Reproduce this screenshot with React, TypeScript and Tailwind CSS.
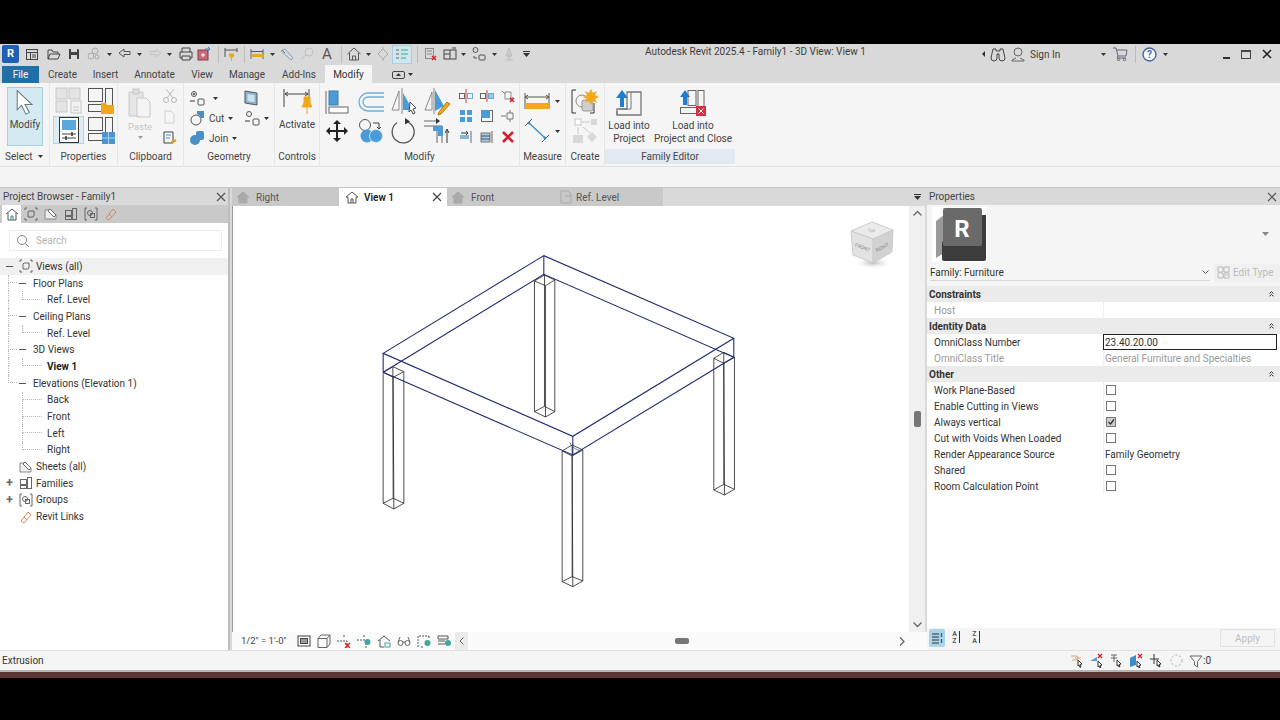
import type { ReactNode } from 'react'

type IcProps = { w?: number; h?: number; className?: string; children: ReactNode }

function Ic({ w = 16, h = 16, className, children }: IcProps) {
  return (
    <svg width={w} height={h} viewBox={`0 0 ${w} ${h}`} fill="none" stroke="#555" strokeWidth="1" className={`shrink-0 ${className ?? ''}`}>
      {children}
    </svg>
  )
}

const Drop = () => (
  <svg width="5" height="3" viewBox="0 0 5 3" className="shrink-0">
    <path d="M0 0h5L2.5 3z" fill="#333" />
  </svg>
)

function Cell({ className, children }: { className: string; children?: ReactNode }) {
  return <span className={`flex shrink-0 items-center justify-center ${className}`}>{children}</span>
}

const Sep = () => <span className="h-[17px] w-px bg-[#bcbcbc]" />

function TitleBar() {
  return (
    <div className="flex h-[20px] items-center bg-[#d9d9d9] text-[#3d3d3d]">
      <Cell className="w-[21px]">
        <span className="flex h-[18px] w-[17px] items-center justify-center rounded-[2px] bg-[#1f5fb4] text-[11px] font-bold text-white">R</span>
      </Cell>
      <Cell className="w-[22px]">
        <Ic><rect x="2.5" y="3.5" width="11" height="10" stroke="#444" /><path d="M2.5 6.5h11M6.5 6.5v7M8 9h4M8 11h4" stroke="#444" /></Ic>
      </Cell>
      <Cell className="w-[21px]">
        <Ic><path d="M2 13V4h4l1 2h5v2M2 13l2-5h10l-2 5z" stroke="#444" /></Ic>
      </Cell>
      <Cell className="w-[20px]">
        <Ic><path d="M3 3h9l1 1v9H3z" fill="#444" stroke="none" /><rect x="5" y="3" width="6" height="3" fill="#ddd" stroke="none" /><rect x="5" y="9" width="6" height="4" fill="#ddd" stroke="none" /></Ic>
      </Cell>
      <Cell className="w-[18px]">
        <Ic><circle cx="6" cy="10" r="3" stroke="#aaa" /><circle cx="10" cy="5" r="3" stroke="#aaa" /><circle cx="12" cy="11" r="2" stroke="#aaa" /></Ic>
      </Cell>
      <Cell className="w-[15px]"><Drop /></Cell>
      <Cell className="w-[15px]">
        <Ic w={14} h={12}><path d="M1 5l5-4v2.500h6v3H6V9z" stroke="#555" /></Ic>
      </Cell>
      <Cell className="w-[15px]"><Drop /></Cell>
      <Cell className="w-[15px]">
        <Ic w={14} h={12}><path d="M13 5L8 1v2.500H2v3h6V9z" stroke="#c4c4c4" /></Ic>
      </Cell>
      <Cell className="w-[15px]"><Drop /></Cell>
      <Cell className="w-[17px]">
        <Ic><path d="M4 6V2h8v4M4 12H2V6h12v6h-2M4 10h8v4H4z" stroke="#444" /></Ic>
      </Cell>
      <Cell className="w-[20px]">
        <Ic><rect x="2" y="4" width="10" height="10" fill="#c96a78" stroke="#8c3a48" /><path d="M5 9h4M7 7v4" stroke="#fff" /><path d="M9 3h5M12 1l2 2-2 2" stroke="#3a7fc4" /></Ic>
      </Cell>
      <Cell className="w-[8px]"><Sep /></Cell>
      <Cell className="w-[18px]">
        <Ic><path d="M2 2v9M14 2v4M2 4h12" /><path d="M6 8h5l-1 3H7zM8.500 11v4" fill="#e8a91c" stroke="#e8a91c" /></Ic>
      </Cell>
      <Cell className="w-[8px]"><Sep /></Cell>
      <Cell className="w-[18px]">
        <Ic><path d="M2 3v10M14 3v10" stroke="#666" /><rect x="2" y="8" width="12" height="3" fill="#e8a91c" stroke="none" /><path d="M2 5.500h12" /></Ic>
      </Cell>
      <Cell className="w-[12px]"><Drop /></Cell>
      <Cell className="w-[18px]">
        <Ic><path d="M2 5l4-2 8 9-2 2z" stroke="#7aa6c4" /><path d="M3 4l3 3" stroke="#777" /></Ic>
      </Cell>
      <Cell className="w-[22px]">
        <Ic><circle cx="10" cy="6" r="4" stroke="#c0c0c0" /><path d="M2 13l5-4" stroke="#c0c0c0" /></Ic>
      </Cell>
      <Cell className="w-[18px]"><span className="text-[15px] leading-none text-[#555]">A</span></Cell>
      <Cell className="w-[10px]"><Sep /></Cell>
      <Cell className="w-[15px]">
        <Ic><path d="M1.500 8L8 2l6.500 6M3.500 7v7h9V7M6.500 14v-4h3v4" stroke="#555" /></Ic>
      </Cell>
      <Cell className="w-[14px]"><Drop /></Cell>
      <Cell className="w-[15px]">
        <Ic><path d="M8 3l5 5-5 5-5-5zM8 1v2M8 13v2" stroke="#aaa" /></Ic>
      </Cell>
      <Cell className="w-[24px]">
        <span className="flex h-[19px] w-[20px] items-center justify-center border border-[#a8d0dc] bg-[#cfe6ee]">
          <Ic w={14} h={12}><path d="M1 2h3M1 6h3M1 10h3" stroke="#666" /><path d="M6 2h7M6 6h7M6 10h5" stroke="#3a8" /></Ic>
        </span>
      </Cell>
      <Cell className="w-[6px]"><Sep /></Cell>
      <Cell className="w-[21px]">
        <Ic><rect x="2.500" y="2.500" width="8" height="10" stroke="#888" /><path d="M4 5h5M4 8h5" stroke="#888" /><path d="M9 10l4 4M13 10l-4 4" stroke="#d22" strokeWidth="1.500" /></Ic>
      </Cell>
      <Cell className="w-[17px]">
        <Ic><rect x="2" y="4" width="12" height="9" stroke="#444" /><path d="M2 8h6M8 4v9M10 2h4" stroke="#444" /></Ic>
      </Cell>
      <Cell className="w-[11px]"><Drop /></Cell>
      <Cell className="w-[19px]">
        <Ic><circle cx="4.500" cy="4" r="2.500" stroke="#555" /><rect x="8" y="9" width="6" height="5" rx="1" stroke="#555" /><path d="M3 10v2h3" stroke="#555" /></Ic>
      </Cell>
      <Cell className="w-[13px]"><Drop /></Cell>
      <Cell className="w-[15px]">
        <Ic><path d="M8 2l3 8H5zM8 10v4M4 14h8" stroke="#bbb" fill="#ccc" /></Ic>
      </Cell>
      <Cell className="w-[20px]">
        <svg width="7" height="6" viewBox="0 0 7 6"><path d="M0 .5h7" stroke="#333" /><path d="M0 2h7L3.500 6z" fill="#333" /></svg>
      </Cell>
      <span className="mb-[5px] ml-[109px] text-[10px] leading-none">Autodesk Revit 2025.4 - Family1 - 3D View: View 1</span>
      <div className="ml-auto flex items-center pr-[2px]">
        <Cell className="w-[10px]">
          <svg width="3" height="6" viewBox="0 0 3 6"><path d="M3 0v6L0 3z" fill="#333" /></svg>
        </Cell>
        <Cell className="w-[20px]">
          <Ic><path d="M3 3h3v2h4V3h3l2 9a2 2 0 0 1-6 0V8H7v4a2 2 0 0 1-6 0z" stroke="#444" /></Ic>
        </Cell>
        <Cell className="w-[20px]">
          <Ic><circle cx="8" cy="6" r="4" stroke="#666" /><path d="M2 15v-1l4-2M14 15v-1l-4-2M2 15h12" stroke="#666" /></Ic>
        </Cell>
        <span className="ml-[2px] w-[68px] text-[10px]">Sign In</span>
        <Cell className="w-[10px]"><Drop /></Cell>
        <Cell className="w-[24px]">
          <Ic><path d="M1 2h3l2 8h8l1-6H5M6 10l-1 2h9" stroke="#667" /><circle cx="6.500" cy="13.500" r="1.200" stroke="#667" /><circle cx="12.500" cy="13.500" r="1.200" stroke="#667" /></Ic>
        </Cell>
        <Cell className="w-[6px]"><Sep /></Cell>
        <Cell className="w-[22px]">
          <svg width="15" height="15" viewBox="0 0 15 15">
            <circle cx="7.500" cy="7.500" r="6.500" fill="#fff" stroke="#3f66a8" strokeWidth="1.400" />
            <text x="7.500" y="11" textAnchor="middle" fontSize="10" fontWeight="700" fill="#3f66a8">?</text>
          </svg>
        </Cell>
        <Cell className="w-[10px]"><Drop /></Cell>
        <span className="w-[46px]" />
        <Cell className="w-[20px]"><span className="mt-[7px] h-[2px] w-[7px] bg-[#333]" /></Cell>
        <Cell className="w-[20px]"><span className="h-[9px] w-[10px] border border-t-2 border-[#444]" /></Cell>
        <Cell className="w-[22px]">
          <Ic w={12} h={12}><path d="M2 2l8 8M10 2l-8 8" stroke="#222" strokeWidth="1.600" /></Ic>
        </Cell>
      </div>
    </div>
  )
}

function TabRow() {
  const tabs = [
    ['Create', 'w-[45px]'],
    ['Insert', 'w-[41px]'],
    ['Annotate', 'w-[57px]'],
    ['View', 'w-[38px]'],
    ['Manage', 'w-[52px]'],
    ['Add-Ins', 'w-[52px]'],
  ]
  return (
    <div className="flex h-[19px] items-end bg-[#d9d9d9] text-[10px] text-[#444]">
      <span className="ml-[2px] flex h-[17px] w-[37px] items-center justify-center bg-[#1f6fa8] text-white">File</span>
      <span className="w-[1px]" />
      <div className="flex h-[17px] items-center">
        {tabs.map(([label, cls]) => (
          <span key={label} className={`text-center ${cls}`}>{label}</span>
        ))}
      </div>
      <span className="flex h-[18px] w-[47px] items-center justify-center bg-[#f5f5f5] text-[#333]">Modify</span>
      <Cell className="ml-[19px] h-[17px] w-[14px]">
        <span className="flex h-[8px] w-[13px] items-center justify-center rounded-[2px] border border-[#444]">
          <svg width="5" height="3" viewBox="0 0 5 3"><path d="M0 3h5L2.500 0z" fill="#333" /></svg>
        </span>
      </Cell>
      <Cell className="ml-[3px] h-[17px] w-[5px]"><Drop /></Cell>
    </div>
  )
}

function Panel({ className, label, labelClass, children }: { className: string; label: string; labelClass?: string; children: ReactNode }) {
  return (
    <div className={`flex shrink-0 flex-col border-r border-[#e6e6e6] ${className}`}>
      <div className="h-[65px]">{children}</div>
      <div className={`flex h-[17px] items-center justify-center text-[10px] text-[#444] ${labelClass ?? ''}`}>{label}</div>
    </div>
  )
}

const ArrowCursor = ({ s = 26 }: { s?: number }) => (
  <svg width={s} height={s} viewBox="0 0 30 30" fill="#fff" stroke="#6a7a82" strokeWidth="1.200" className="shrink-0">
    <path d="M6 2l17 16h-8l5 9-4 2-5-10-5 5z" />
  </svg>
)

function Ribbon() {
  const gray = '#c8c8c8'
  return (
    <div className="flex h-[83px] bg-[#f5f5f5] text-[#444]">
      <Panel className="w-[50px]" label="" labelClass="hidden">
        <div className="flex h-[82px] flex-col">
          <div className="ml-[7px] mt-[4px] flex h-[59px] w-[36px] flex-col items-center border border-[#a8d0dc] bg-[#d5eaf2] pt-[1px]">
            <ArrowCursor />
            <span className="mt-[2px] text-[10px]">Modify</span>
          </div>
          <div className="mt-[2px] flex h-[17px] items-center gap-[6px] pl-[5px] text-[10px]">
            Select <Drop />
          </div>
        </div>
      </Panel>
      <Panel className="w-[68px]" label="Properties">
        <div className="grid grid-cols-[33px_31px] pl-[2px] pt-[4px]">
          <div className="flex h-[29px] items-start justify-center">
            <Ic w={30} h={28}>
              <rect x="2" y="1" width="11" height="11" fill="#e4e4e4" stroke={gray} />
              <rect x="15" y="1" width="11" height="11" fill="#e4e4e4" stroke={gray} />
              <rect x="2" y="14" width="11" height="11" fill="#e4e4e4" stroke={gray} />
              <rect x="17" y="14" width="10" height="12" fill="#f2f2f2" stroke={gray} />
              <path d="M19 20h6M19 23h6" stroke={gray} />
            </Ic>
          </div>
          <div className="flex h-[29px] items-start justify-center">
            <Ic w={28} h={28}>
              <rect x="1.500" y="1.500" width="14" height="13" stroke="#555" />
              <rect x="18.500" y="1.500" width="7" height="23" stroke="#555" />
              <rect x="1.500" y="17.500" width="14" height="7" stroke="#555" />
              <path d="M14 16h5l1 2h7v9H14z" fill="#f2a71b" stroke="none" />
            </Ic>
          </div>
          <div className="flex h-[29px] items-start justify-center">
            <span className="flex h-[28px] w-[31px] items-center justify-center border border-[#b0d6e2] bg-[#dcedf3]">
              <Ic w={20} h={26}>
                <rect x=".5" y=".5" width="19" height="25" fill="#fff" stroke="#333" />
                <rect x="3" y="3" width="14" height="10" fill="#5aa9dc" stroke="none" />
                <path d="M3 17h14M3 21h14" stroke="#444" />
                <path d="M13 15v4M7 19v4" stroke="#333" strokeWidth="1.500" />
              </Ic>
            </span>
          </div>
          <div className="flex h-[29px] items-start justify-center">
            <Ic w={28} h={28}>
              <rect x="1.500" y="1.500" width="14" height="13" stroke="#555" />
              <rect x="18.500" y="1.500" width="7" height="23" stroke="#555" />
              <rect x="1.500" y="17.500" width="14" height="7" stroke="#555" />
              <rect x="15" y="16" width="13" height="12" fill="#4b93d1" stroke="none" />
              <path d="M21.500 16v12M15 22h13" stroke="#a8d0ef" />
            </Ic>
          </div>
        </div>
      </Panel>
      <Panel className="w-[66px]" label="Clipboard">
        <div className="flex pl-[10px] pt-[5px]">
          <div className="flex w-[24px] flex-col items-center">
            <Ic w={24} h={31}>
              <path d="M1 4h14v24H1z" fill="#e6e6e6" stroke={gray} />
              <rect x="5" y="1" width="6" height="5" fill="#ddd" stroke={gray} />
              <path d="M9 10h9l4 4v15H9z" fill="#f4f4f4" stroke={gray} />
            </Ic>
            <span className="mt-[1px] text-[9.5px] leading-[13px] text-[#c6c6c6]">Paste</span>
            <span className="mt-[3px]"><svg width="5" height="3" viewBox="0 0 5 3"><path d="M0 0h5L2.500 3z" fill="#999" /></svg></span>
          </div>
          <div className="ml-[9px] flex w-[18px] flex-col items-center gap-[5px]">
            <Ic>
              <circle cx="4" cy="12" r="2.500" stroke="#b8b8b8" />
              <circle cx="12" cy="12" r="2.500" stroke="#b8b8b8" />
              <path d="M5 10l7-9M11 10L4 1" stroke="#b8b8b8" />
            </Ic>
            <Ic><path d="M3 2h6l3 3v9H3z" stroke="#d0d0d0" /></Ic>
            <Ic>
              <path d="M2 2h9v11H2z" stroke="#444" />
              <path d="M4 5h5M4 8h4" stroke="#4a90c8" />
              <path d="M9 13l5-3" stroke="#d8a21c" strokeWidth="2.500" />
            </Ic>
          </div>
        </div>
      </Panel>
      <Panel className="w-[91px]" label="Geometry">
        <div className="grid grid-cols-[48px_30px] gap-y-[4px] pl-[4px] pt-[7px] text-[10px]">
          <div className="flex h-[16px] items-center gap-[8px] pl-[1px]">
            <Ic>
              <circle cx="5" cy="4" r="2.500" stroke="#555" />
              <circle cx="5" cy="4" r=".8" fill="#555" />
              <rect x="9" y="9" width="6" height="6" rx="1" stroke="#555" />
              <path d="M1 11h5" stroke="#333" />
            </Ic>
            <Drop />
          </div>
          <div className="flex h-[16px] items-center justify-center">
            <Ic w={14} h={16}><path d="M1 1l12 2v12L1 13z" fill="#8ab4d4" stroke="#555" /><path d="M3.500 4l7 1v7l-7-1z" fill="#cfe1ee" stroke="none" /></Ic>
          </div>
          <div className="flex h-[16px] items-center gap-[4px] pl-[1px]">
            <Ic><circle cx="7" cy="10" r="5" stroke="#555" /><path d="M8 1h7v7H12A6 6 0 0 0 8 4z" fill="#4a90c8" stroke="none" /></Ic>
            <span>Cut</span>
            <Drop />
          </div>
          <div className="flex h-[16px] items-center gap-[4px] pl-[8px]">
            <Ic>
              <circle cx="5" cy="4" r="2.500" stroke="#555" />
              <rect x="9" y="9" width="6" height="6" rx="1" stroke="#555" />
              <path d="M1 11h5" stroke="#333" />
            </Ic>
            <Drop />
          </div>
          <div className="flex h-[16px] items-center gap-[4px] pl-[1px]">
            <Ic><circle cx="6" cy="10" r="5" fill="#4a90c8" stroke="none" /><rect x="7" y="1" width="8" height="9" rx="2" fill="#4a90c8" stroke="none" /></Ic>
            <span>Join</span>
            <Drop />
          </div>
        </div>
      </Panel>
      <Panel className="w-[45px]" label="Controls">
        <div className="flex flex-col items-center pt-[5px] text-[10px]">
          <Ic w={30} h={30}>
            <path d="M2 1v18M27 1v18" stroke="#444" />
            <path d="M3 6h23M3 6l3-2M3 6l3 2M26 6l-3-2M26 6l-3 2" stroke="#444" />
            <path d="M22 9h6v6l2 4H20l2-4zM25 19v7" fill="#f0a81c" stroke="#f0a81c" />
          </Ic>
          <span className="-mt-[1px]">Activate</span>
        </div>
      </Panel>
      <Panel className="w-[200px]" label="Modify">
        <div className="flex pt-[4px]">
          <div className="grid grid-cols-[34px_33px_33px_33px]">
            <div className="flex h-[29px] items-center justify-center">
              <Ic w={24} h={24}>
                <path d="M1 1v23" stroke="#666" />
                <rect x="4" y="1" width="9" height="14" fill="#4a9bd8" stroke="#3a7fb0" />
                <rect x="4" y="17" width="19" height="6" fill="#fff" stroke="#666" />
              </Ic>
            </div>
            <div className="flex h-[29px] items-center justify-center">
              <Ic w={28} h={20}>
                <path d="M27 1H11a9 9 0 0 0 0 18h16" stroke="#6fb0d8" strokeWidth="1.400" />
                <path d="M27 5H11a5 5 0 0 0 0 10h16" stroke="#6fb0d8" strokeWidth="1.400" />
              </Ic>
            </div>
            <div className="flex h-[29px] items-center justify-center">
              <Ic w={26} h={28}>
                <path d="M8 3v19H1zM11 0v26" stroke="#888" />
                <path d="M12 5l8 14v3h-8z" fill="#4a9bd8" stroke="none" />
                <path d="M19 14l6 6-3 1 2 4-2 1-2-4-2 2z" fill="#fff" stroke="#444" />
              </Ic>
            </div>
            <div className="flex h-[29px] items-center justify-center">
              <Ic w={28} h={28}>
                <path d="M9 4v18H2zM11 0v26" stroke="#888" />
                <path d="M12 2l9 16-9 5z" fill="#4a9bd8" stroke="none" />
                <path d="M16 24l8-10 3 2-9 10-3 1z" fill="#f0a81c" stroke="#b87c10" />
              </Ic>
            </div>
            <div className="flex h-[29px] items-center justify-center">
              <Ic w={24} h={24}>
                <path d="M12 1l4 4h-3v6h6V8l4 4-4 4v-3h-6v6h3l-4 4-4-4h3v-6H5v3l-4-4 4-4v3h6V5H8z" fill="#222" stroke="none" />
              </Ic>
            </div>
            <div className="flex h-[29px] items-center justify-center">
              <Ic w={26} h={26}>
                <circle cx="7" cy="7" r="5.500" stroke="#555" />
                <path d="M15 5h6v6M19 9l2 2 2-2" stroke="#444" />
                <circle cx="9" cy="18" r="6.500" fill="#4a9bd8" stroke="none" />
                <circle cx="18" cy="18" r="6.500" fill="#4a9bd8" stroke="#cfe4f2" />
              </Ic>
            </div>
            <div className="flex h-[29px] items-center justify-center">
              <Ic w={26} h={26}>
                <path d="M15 3.300A11 11 0 1 1 6 4.800" stroke="#555" strokeWidth="1.300" />
                <path d="M14 0l5 3.500-5 3z" fill="#333" stroke="none" />
              </Ic>
            </div>
            <div className="flex h-[29px] items-center justify-center">
              <Ic w={28} h={26}>
                <path d="M1 3h14M1 8h18V25M14 13v12M18 8" stroke="#666" />
                <path d="M13 0l4 3-4 3z" fill="#333" stroke="none" />
                <path d="M10 8h10v10h-5v-5h-5z" fill="#4a9bd8" stroke="none" />
                <path d="M24 25V12M22 15l2-4 2 4" stroke="#333" />
              </Ic>
            </div>
          </div>
          <div className="ml-[2px] grid grid-cols-[21px_21px_21px] gap-y-[4px] pt-[1px]">
            <div className="flex h-[16px] items-center justify-center">
              <Ic><path d="M8 1v14" stroke="#c44" /><rect x="1.500" y="5.500" width="5" height="5" stroke="#666" /><rect x="9.500" y="5.500" width="5" height="5" stroke="#6aa8d8" /></Ic>
            </div>
            <div className="flex h-[16px] items-center justify-center">
              <Ic><rect x="1.500" y="5.500" width="5" height="5" stroke="#666" /><rect x="9.500" y="5.500" width="5" height="5" fill="#9cc8e8" stroke="#6aa8d8" /><path d="M8 2v12" stroke="#c44" /></Ic>
            </div>
            <div className="flex h-[16px] items-center justify-center">
              <Ic><path d="M2 3l3 3M5 4h6v7H5zM13 9l-3 5M10 9l4 5" stroke="#888" /><path d="M10 10l4 4M14 10l-4 4" stroke="#d22" strokeWidth="1.400" /></Ic>
            </div>
            <div className="flex h-[16px] items-center justify-center">
              <Ic><rect x="2" y="2" width="5" height="5" fill="#4a9bd8" stroke="none" /><rect x="9" y="2" width="5" height="5" fill="#4a9bd8" stroke="none" /><rect x="2" y="9" width="5" height="5" fill="#4a9bd8" stroke="none" /><rect x="9" y="9" width="5" height="5" fill="#4a9bd8" stroke="none" /></Ic>
            </div>
            <div className="flex h-[16px] items-center justify-center">
              <Ic><rect x="2.500" y="2.500" width="11" height="11" stroke="#666" /><rect x="2" y="2" width="9" height="8" fill="#4a9bd8" stroke="none" /></Ic>
            </div>
            <div className="flex h-[16px] items-center justify-center">
              <Ic><path d="M1 8h5M7 5h6v6H7zM10 2v3M10 11v3" stroke="#777" /></Ic>
            </div>
            <div className="flex h-[16px] items-center justify-center">
              <Ic><path d="M13 2v12" stroke="#666" /><rect x="2" y="6" width="9" height="4" fill="#8ab4d4" stroke="none" /><path d="M3 4h7M8 2l2 2-2 2" stroke="#333" /></Ic>
            </div>
            <div className="flex h-[16px] items-center justify-center">
              <Ic><path d="M13 2v12" stroke="#666" /><rect x="2" y="4" width="9" height="9" fill="#a8c8e0" stroke="#777" /><path d="M2 7h9M2 10h9" stroke="#555" /></Ic>
            </div>
            <div className="flex h-[16px] items-center justify-center">
              <Ic w={14} h={14}><path d="M2 2l10 10M12 2L2 12" stroke="#d81e2c" strokeWidth="2.600" /></Ic>
            </div>
          </div>
        </div>
      </Panel>
      <Panel className="w-[46px]" label="Measure">
        <div className="grid grid-cols-[32px_8px] gap-y-[7px] pl-[1px] pt-[8px]">
          <div className="flex h-[20px] items-center justify-center">
            <Ic w={26} h={20}>
              <path d="M1 2v16M25 2v16M1 6h24M1 6l3-2M1 6l3 2M25 6l-3-2M25 6l-3 2" stroke="#555" />
              <rect x="1" y="12" width="24" height="6" fill="#f0a81c" stroke="none" />
            </Ic>
          </div>
          <div className="flex items-center justify-center"><Drop /></div>
          <div className="flex h-[26px] items-center justify-center">
            <Ic w={26} h={26}>
              <path d="M8 1L1 8M25 17l-7 7" stroke="#555" />
              <path d="M5 5l16 15" stroke="#3f8dc8" strokeWidth="1.400" />
              <circle cx="5" cy="5" r="1.400" fill="#3f8dc8" stroke="none" />
              <circle cx="21" cy="20" r="1.400" fill="#3f8dc8" stroke="none" />
            </Ic>
          </div>
          <div className="flex items-center justify-center"><Drop /></div>
        </div>
      </Panel>
      <Panel className="w-[39px]" label="Create">
        <div className="flex flex-col items-center gap-[3px] pt-[5px]">
          <Ic w={28} h={27}>
            <path d="M5 2H1v23h4M19 25h4V15" stroke="#333" />
            <circle cx="11" cy="13" r="6" stroke="#888" />
            <rect x="11" y="12" width="11" height="11" rx="2" fill="#cfcfcf" stroke="#999" />
            <path d="M20 1l2 4 4-2-2 4 4 2-4 2 2 4-4-2-2 4-2-4-4 2 2-4-4-2 4-2-2-4 4 2z" fill="#f0a81c" stroke="none" />
          </Ic>
          <Ic w={26} h={26}>
            <rect x="3" y="1" width="6" height="6" fill="#fff" stroke="#c8c8c8" />
            <rect x="19" y="1" width="6" height="6" fill="#d8d8d8" stroke="none" />
            <path d="M10 4h8M6 9v7M11 9l7 6" stroke="#c8c8c8" />
            <rect x="1" y="17" width="10" height="8" fill="#d8d8d8" stroke="none" />
            <path d="M20 14l5 5-5 5-5-5z" fill="#d8d8d8" stroke="none" />
          </Ic>
        </div>
      </Panel>
      <div className="flex w-[130px] shrink-0 flex-col">
        <div className="flex h-[65px] text-[10px] leading-[13px]">
          <div className="flex w-[48px] flex-col items-center pt-[6px]">
            <Ic w={28} h={28}>
              <path d="M1 9l6-8 6 8H9v9H5V9z" fill="#1f7fce" stroke="none" />
              <path d="M12 3h14v23H2v-6h10z" stroke="#777" strokeWidth="1.300" />
              <path d="M2 26v-4" stroke="#777" />
              <path d="M16 3v17H5" stroke="#777" />
            </Ic>
            <span className="mt-[2px] whitespace-nowrap text-center">Load into<br />Project</span>
          </div>
          <div className="flex w-[80px] flex-col items-center pt-[6px]">
            <Ic w={28} h={28}>
              <path d="M1 8l5-7 5 7H8v8H4V8z" fill="#1f7fce" stroke="none" />
              <rect x="9" y="1.500" width="8" height="15" stroke="#666" />
              <rect x="19" y="1.500" width="6" height="17" stroke="#666" />
              <rect x="1.500" y="18.500" width="16" height="6" stroke="#666" />
              <rect x="17" y="17" width="10" height="10" fill="#d62f44" stroke="none" />
              <path d="M19.500 19.500l5 5M24.500 19.500l-5 5" stroke="#fff" />
            </Ic>
            <span className="mt-[2px] whitespace-nowrap text-center">Load into<br />Project and Close</span>
          </div>
        </div>
        <div className="mt-[1px] flex h-[15px] items-center justify-center bg-[#e2e9f1] text-[10px]">Family Editor</div>
      </div>
    </div>
  )
}

type TreeItem = {
  label: string
  depth: 0 | 1 | 2
  sign?: '+' | '-'
  icon?: 'views' | 'sheets' | 'families' | 'groups' | 'links'
  bold?: boolean
  last?: boolean
  noTrunk?: boolean
  active?: boolean
}

const tree: TreeItem[] = [
  { label: 'Views (all)', depth: 0, sign: '-', icon: 'views', active: true },
  { label: 'Floor Plans', depth: 1, sign: '-' },
  { label: 'Ref. Level', depth: 2, last: true },
  { label: 'Ceiling Plans', depth: 1, sign: '-' },
  { label: 'Ref. Level', depth: 2, last: true },
  { label: '3D Views', depth: 1, sign: '-' },
  { label: 'View 1', depth: 2, bold: true, last: true },
  { label: 'Elevations (Elevation 1)', depth: 1, sign: '-', last: true },
  { label: 'Back', depth: 2, noTrunk: true },
  { label: 'Front', depth: 2, noTrunk: true },
  { label: 'Left', depth: 2, noTrunk: true },
  { label: 'Right', depth: 2, last: true, noTrunk: true },
  { label: 'Sheets (all)', depth: 0, icon: 'sheets' },
  { label: 'Families', depth: 0, sign: '+', icon: 'families' },
  { label: 'Groups', depth: 0, sign: '+', icon: 'groups' },
  { label: 'Revit Links', depth: 0, icon: 'links' },
]

function BrowserIcon({ kind, s = 14 }: { kind: NonNullable<TreeItem['icon']>; s?: number }) {
  return (
    <svg width={s} height={s} viewBox="0 0 14 14" fill="none" stroke="#666" className="shrink-0">
      {kind === 'views' && (
        <>
          <path d="M3 1H1v2M11 1h2v2M3 13H1v-2M11 13h2v-2" />
          <path d="M4 5l1-1h5v5l-1 1H4z" />
        </>
      )}
      {kind === 'sheets' && (
        <>
          <path d="M1 3h6l5 5v4H1z" fill="#eee" stroke="#888" />
          <path d="M6 2l6 6-2 2-6-6z" fill="#fff" stroke="#666" />
        </>
      )}
      {kind === 'families' && (
        <>
          <rect x="1.500" y="3.500" width="6" height="5" />
          <rect x="8.500" y="1.500" width="4" height="11" />
          <rect x="1.500" y="9.500" width="6" height="3" />
        </>
      )}
      {kind === 'groups' && (
        <>
          <path d="M3 1H1v12h2M11 1h2v12h-2" />
          <circle cx="6" cy="6" r="2.500" />
          <rect x="6.500" y="6.500" width="4" height="4" />
        </>
      )}
      {kind === 'links' && <path d="M2 11l3 2 7-8-3-3zM5 7l3 3" stroke="#d08a60" />}
    </svg>
  )
}

function Row({ item }: { item: TreeItem }) {
  return (
    <div className={`flex h-[16.7px] items-center text-[10px] text-[#333] ${item.active ? 'bg-[#f0f0f0]' : ''}`}>
      {item.depth === 0 ? (
        <>
          <span className="flex w-[19px] shrink-0 justify-center">
            {item.sign === '-' && <span className="h-px w-[7px] bg-[#555]" />}
            {item.sign === '+' && <span className="text-[12px] font-bold leading-none text-[#666]">+</span>}
          </span>
          {item.icon && <BrowserIcon kind={item.icon} />}
          <span className="ml-[3px]">{item.label}</span>
        </>
      ) : (
        <>
          <span className="ml-[8px] flex h-full w-[9px] shrink-0 flex-col">
            {item.noTrunk ? null : (
              <>
                <span className={`h-1/2 border-l border-dotted border-[#bbb] ${item.depth === 1 ? 'border-b' : ''}`} />
                <span className={`h-1/2 ${item.last && item.depth === 1 ? '' : 'border-l border-dotted border-[#bbb]'}`} />
              </>
            )}
          </span>
          {item.depth === 1 ? (
            <>
              <span className="ml-[2px] h-px w-[7px] shrink-0 bg-[#555]" />
              <span className="ml-[7px]">{item.label}</span>
            </>
          ) : (
            <>
              <span className="ml-[5px] flex h-full w-[20px] shrink-0 flex-col">
                <span className="h-1/2 border-b border-l border-dotted border-[#bbb]" />
                <span className={`h-1/2 ${item.last ? '' : 'border-l border-dotted border-[#bbb]'}`} />
              </span>
              <span className={`ml-[5px] ${item.bold ? 'font-bold text-[#222]' : ''}`}>{item.label}</span>
            </>
          )}
        </>
      )}
    </div>
  )
}

function ProjectBrowser() {
  return (
    <div className="flex w-[230px] shrink-0 flex-col border-r-2 border-[#bdbdbd] bg-white">
      <div className="flex h-[17px] items-center justify-between bg-[#d9d9d9] pl-[3px] pr-[1px] text-[10px] text-[#444]">
        <span>Project Browser - Family1</span>
        <Ic w={12} h={12}><path d="M2 2l8 8M10 2l-8 8" stroke="#555" strokeWidth="1.200" /></Ic>
      </div>
      <div className="flex h-[18px] items-center bg-[#c9c9c9] pl-[2px]">
        <span className="flex h-[18px] w-[19px] items-center justify-center bg-white">
          <Ic w={14} h={14}><path d="M1 7l6-5 6 5M3 6v7h8V6" stroke="#555" /><path d="M6 13V9h2v4" stroke="#3a8a9a" /></Ic>
        </span>
        <span className="flex w-[20px] justify-center"><BrowserIcon kind="views" /></span>
        <span className="flex w-[20px] justify-center"><BrowserIcon kind="sheets" /></span>
        <span className="flex w-[20px] justify-center"><BrowserIcon kind="families" /></span>
        <span className="flex w-[20px] justify-center"><BrowserIcon kind="groups" /></span>
        <span className="flex w-[20px] justify-center"><BrowserIcon kind="links" /></span>
      </div>
      <div className="mx-[9px] mt-[7px] flex h-[21px] w-[213px] items-center border border-[#ececec] pl-[6px] text-[10px] text-[#b5b5b5]">
        <Ic w={14} h={14}><circle cx="6" cy="6" r="4.500" stroke="#888" /><path d="M9.500 9.500L13 13" stroke="#888" /></Ic>
        <span className="ml-[6px]">Search</span>
      </div>
      <div className="mt-[7px] flex flex-col">
        {tree.map((item, i) => (
          <Row key={i} item={item} />
        ))}
      </div>
    </div>
  )
}

function ViewTab({ label, className, active, kind }: { label: string; className: string; active?: boolean; kind: 'house' | 'sheet' }) {
  return (
    <div className={`flex h-full shrink-0 items-center pl-[3px] text-[10px] ${active ? 'bg-white font-semibold text-[#222]' : 'bg-[#c9c9c9] text-[#555]'} ${className}`}>
      {kind === 'house' ? (
        <Ic w={14} h={14} className={active ? 'ml-[3px]' : 'ml-[1px]'}>
          <path d="M1 7l6-5 6 5H11v6H3V7z" fill={active ? '#fff' : '#aaa'} stroke={active ? '#555' : '#aaa'} />
          {active && <path d="M6 13V9h2v4" stroke="#555" />}
        </Ic>
      ) : (
        <Ic w={14} h={14} className="ml-[1px]"><path d="M2 1h7l3 3v9H2zM6 6h6" stroke="#aaa" /></Ic>
      )}
      <span className={active ? 'ml-[5px]' : kind === 'sheet' ? 'ml-[3px]' : 'ml-[6px]'}>{label}</span>
      {active && (
        <Ic w={12} h={12} className="ml-auto mr-[4px]"><path d="M2 2l8 8M10 2l-8 8" stroke="#444" strokeWidth="1.200" /></Ic>
      )}
    </div>
  )
}

type Pt = [number, number]

const legs: Pt[][] = [
  [[492, 108], [522, 90], [553, 105], [525, 122], [492, 500], [522, 484], [553, 500], [525, 516]],
  [[38, 382], [67, 365], [100, 380], [68, 397], [38, 775], [68, 760], [100, 775], [70, 792]],
  [[1030, 340], [1060, 322], [1092, 337], [1060, 355], [1030, 735], [1060, 718], [1092, 733], [1062, 750]],
  [[575, 618], [605, 600], [637, 615], [605, 633], [575, 1010], [605, 995], [637, 1008], [607, 1025]],
]

const pts = (list: Pt[]) => list.map((p) => p.join(',')).join(' ')

function TableModel() {
  return (
    <svg viewBox="233 206 675 426" className="h-full w-full" fill="none">
      <g transform="translate(370 245) scale(0.3333)">
        {legs.map((l, i) => (
          <g key={i} stroke="#222" strokeWidth="2.400">
            <polygon points={pts(l.slice(0, 4))} />
            <polygon points={pts(l.slice(4))} />
            {[0, 1, 2, 3].map((k) => (
              <line key={k} x1={l[k][0]} y1={l[k][1]} x2={l[k + 4][0]} y2={l[k + 4][1]} />
            ))}
          </g>
        ))}
        <g stroke="#1e2a6e" strokeWidth="3.200">
          <polygon points="520,32 38,325 607,574 1090,280" />
          <polyline points="38,382 520,88 1090,337 607,630 38,382" />
          <path d="M520 32v56M38 325v57M1090 280v57M607 574v56" />
        </g>
        <path d="M598 592c4 12 14 20 28 24" stroke="#444" strokeWidth="2" />
      </g>
    </svg>
  )
}

function ViewCube() {
  return (
    <svg width="50" height="52" viewBox="0 0 50 52" className="shrink-0">
      <defs>
        <radialGradient id="cubeShadow">
          <stop offset="0" stopColor="#bbb" />
          <stop offset="1" stopColor="#fff" stopOpacity="0" />
        </radialGradient>
      </defs>
      <ellipse cx="25" cy="45" rx="20" ry="6" fill="url(#cubeShadow)" />
      <path d="M3 13l21-9 21 8-20 9z" fill="#ebebeb" stroke="#ccc" />
      <path d="M3 13l22 8v24L5 37z" fill="#e2e2e2" stroke="#ccc" />
      <path d="M45 12L25 21v24l19-11z" fill="#d2d2d2" stroke="#ccc" />
      <text x="23" y="14" textAnchor="middle" fontSize="4" fill="#999" transform="rotate(14 23 14)">TOP</text>
      <text x="14" y="31" textAnchor="middle" fontSize="5" fill="#888" transform="rotate(20 14 31)">FRONT</text>
      <text x="35" y="31" textAnchor="middle" fontSize="5" fill="#888" transform="rotate(-28 35 31)">RIGHT</text>
    </svg>
  )
}

function ViewBar() {
  return (
    <div className="flex h-[18px] items-center bg-[#fbfbfb] text-[#444]">
      <span className="ml-[9px] w-[56px] text-[9.5px]">1/2" = 1'-0"</span>
      <div className="flex items-center gap-[6px]">
        <Ic w={14} h={14}><rect x="1" y="2" width="12" height="10" stroke="#444" /><rect x="3.500" y="4.500" width="7" height="5" fill="#999" stroke="#444" /></Ic>
        <Ic w={14} h={14}><path d="M1 4.500h9v9H1zM1 4.500L4 1h9v9l-3 3.500M10 4.500L13 1" stroke="#666" /></Ic>
        <Ic w={14} h={14}><path d="M3 7h7v7M7 1v3M0 7h2" stroke="#555" strokeDasharray="2 1" /><path d="M8 9l5 5M13 9l-5 5" stroke="#d22" strokeWidth="1.400" /></Ic>
        <Ic w={14} h={14}><path d="M3 6h6v8M7 1v3M0 6h2" stroke="#555" strokeDasharray="2 1" /><circle cx="10.500" cy="8" r="3" fill="#3fa89a" stroke="none" /></Ic>
        <Ic w={14} h={14}><path d="M1 7l6-5 6 5M3 6v7h4" stroke="#555" /><rect x="8" y="9" width="5" height="4" stroke="#3fa89a" /></Ic>
        <Ic w={14} h={14}><circle cx="3.500" cy="9" r="2.500" stroke="#666" /><circle cx="10.500" cy="9" r="2.500" stroke="#666" /><path d="M3 3l-2 5M11 3l2 5M6 8h2" stroke="#666" /></Ic>
        <Ic w={14} h={14}><path d="M1 13V2h11M4 13h3M12 2v3" stroke="#555" strokeDasharray="2 1" /><circle cx="10.500" cy="9" r="3" fill="#3fa89a" stroke="none" /></Ic>
        <Ic w={14} h={14}><path d="M1 2h10v3H1zM1 7h7M1 10h7" stroke="#555" /><circle cx="11" cy="9" r="3" fill="#3fa89a" stroke="none" /></Ic>
      </div>
      <span className="ml-[4px] flex h-[18px] w-[13px] items-center justify-center bg-[#ececec]">
        <svg width="5" height="8" viewBox="0 0 5 8"><path d="M4.500.5L1 4l3.500 3.500" fill="none" stroke="#666" /></svg>
      </span>
      <div className="ml-[207px] h-[6px] w-[14px] rounded-[2px] bg-[#777]" />
      <span className="ml-[210px]">
        <svg width="6" height="9" viewBox="0 0 6 9"><path d="M1 .5L5 4.500 1 8.500" fill="none" stroke="#666" strokeWidth="1.300" /></svg>
      </span>
    </div>
  )
}

function PropRow({ label, children, gray }: { label: string; children?: ReactNode; gray?: boolean }) {
  return (
    <div className="grid h-[16px] grid-cols-[176px_1fr] items-center text-[10px]">
      <span className={`pl-[7px] ${gray ? 'text-[#9a9a9a]' : 'text-[#333]'}`}>{label}</span>
      <div className={`flex h-full items-center border-l border-[#f0f0f0] pl-[1px] ${gray ? 'text-[#9a9a9a]' : 'text-[#333]'}`}>{children}</div>
    </div>
  )
}

function PropHeader({ label }: { label: string }) {
  return (
    <div className="flex h-[16px] items-center justify-between bg-[#ebebeb] pl-[2px] pr-[6px] text-[10px] font-bold text-[#333]">
      {label}
      <svg width="5" height="6" viewBox="0 0 5 6" fill="none" stroke="#333">
        <path d="M.5 2.500L2.500.8l2 1.700M.5 5.200l2-1.700 2 1.700" />
      </svg>
    </div>
  )
}

function Check({ on }: { on?: boolean }) {
  return (
    <span className="ml-[1px] flex h-[10px] w-[10px] items-center justify-center border border-[#777] bg-white">
      {on && (
        <svg width="8" height="8" viewBox="0 0 8 8"><rect width="8" height="8" fill="#ccc" /><path d="M1.500 4l2 2L7 1.500" fill="none" stroke="#333" strokeWidth="1.300" /></svg>
      )}
    </span>
  )
}

function PropertiesPanel() {
  return (
    <div className="flex min-w-0 flex-1 flex-col bg-white">
      <div className="flex h-[17px] items-center justify-between bg-[#d9d9d9] pl-[2px] pr-[2px] text-[10px] text-[#444]">
        <span>Properties</span>
        <Ic w={12} h={12}><path d="M2 2l8 8M10 2l-8 8" stroke="#555" strokeWidth="1.200" /></Ic>
      </div>
      <div className="flex h-[58px] items-center justify-between bg-[#f5f5f5] pl-[5px] pr-[11px]">
        <span className="flex h-[55px] w-[55px] items-center justify-center bg-white">
          <svg width="52" height="54" viewBox="0 0 52 54">
            <path d="M2 14l8-6v38l-8 5z" fill="#999" />
            <rect x="8" y="34" width="44" height="20" rx="2" fill="#3c3c3c" />
            <rect x="46" y="8" width="6" height="30" fill="#3c3c3c" />
            <rect x="9" y="1" width="39" height="38" rx="2" fill="#6a6a6a" />
            <text x="28" y="30" textAnchor="middle" fontSize="24" fontWeight="700" fill="#fff">R</text>
          </svg>
        </span>
        <svg width="7" height="4" viewBox="0 0 7 4"><path d="M0 0h7L3.500 4z" fill="#888" /></svg>
      </div>
      <div className="flex h-[19px] items-center bg-[#f5f5f5] pl-[3px] text-[10px] text-[#333]">
        <span className="flex h-[16px] w-[280px] items-center justify-between border-b border-[#d8d8d8] pr-[1px]">
          Family: Furniture
          <svg width="7" height="5" viewBox="0 0 7 5"><path d="M.5.5l3 3 3-3" fill="none" stroke="#555" /></svg>
        </span>
        <span className="ml-[4px] flex h-[18px] flex-1 items-center gap-[3px] bg-[#f0f0f0] pl-[3px] text-[#bbb]">
          <Ic w={13} h={13}><path d="M1 1h5v5H1zM7 1h5v5H7zM1 7h5v5H1zM7 7h5v5H7zM8 9h3" stroke="#bbb" /></Ic>
          Edit Type
        </span>
      </div>
      <div className="h-[4px] bg-[#f5f5f5]" />
      <div className="flex min-h-0 flex-1 flex-col">
        <PropHeader label="Constraints" />
        <PropRow label="Host" gray />
        <PropHeader label="Identity Data" />
        <div className="grid h-[16px] grid-cols-[176px_1fr] items-center text-[10px] text-[#333]">
          <span className="pl-[7px]">OmniClass Number</span>
          <span className="mr-[3px] flex h-[16px] items-center border border-[#222] pl-[1px]">23.40.20.00</span>
        </div>
        <PropRow label="OmniClass Title" gray>General Furniture and Specialties</PropRow>
        <PropHeader label="Other" />
        <PropRow label="Work Plane-Based"><Check /></PropRow>
        <PropRow label="Enable Cutting in Views"><Check /></PropRow>
        <PropRow label="Always vertical"><Check on /></PropRow>
        <PropRow label="Cut with Voids When Loaded"><Check /></PropRow>
        <PropRow label="Render Appearance Source">Family Geometry</PropRow>
        <PropRow label="Shared"><Check /></PropRow>
        <PropRow label="Room Calculation Point"><Check /></PropRow>
      </div>
      <div className="flex h-[22px] items-center bg-[#f5f5f5] pb-[2px] pl-[2px] pr-[5px]">
        <span className="flex h-[18px] w-[16px] items-center justify-center rounded-[2px] bg-[#a9d4ea]">
          <Ic w={12} h={12}><path d="M1 2h7M1 5h7M1 8h7M1 11h7" stroke="#333" /><path d="M10.500 1v4M10.500 7v4" stroke="#1b6e96" strokeWidth="1.400" /></Ic>
        </span>
        <span className="ml-[2px] flex w-[18px] justify-center text-[7px] font-semibold leading-[7px] text-[#555]">
          <span>A<br />Z</span>
          <span className="ml-[2px] h-[12px] w-px bg-[#333]" />
        </span>
        <span className="ml-[2px] flex w-[18px] justify-center text-[7px] font-semibold leading-[7px] text-[#555]">
          <span>Z<br />A</span>
          <span className="ml-[2px] h-[12px] w-px bg-[#333]" />
        </span>
        <span className="ml-auto flex h-[18px] w-[55px] items-center justify-center rounded-[1px] border border-[#e3e3e3] text-[10px] text-[#c0c0c0]">Apply</span>
      </div>
    </div>
  )
}

function StatusBar() {
  return (
    <div className="flex h-[22px] items-center border-t border-[#e0e0e0] border-b-2 border-b-[#b5b5b5] bg-[#f5f5f5] pl-[2px] text-[#333]">
      <span className="w-[40px] text-[10px]">Extrusion</span>
      <div className="ml-[1027px] flex items-center gap-[5px]">
        <Ic w={15} h={15}><path d="M2 3h5a2 2 0 0 1 0 4H3M6 5h6" stroke="#d9a070" /><path d="M9 7l4 4-2 .5 1 2.500-1 .5-1-2.500-1 1z" fill="#fff" stroke="#333" /></Ic>
        <Ic w={15} h={15}><path d="M1 8l7-4v4z" fill="#5a9bc8" stroke="none" /><path d="M9 1l4 4M13 1L9 5" stroke="#d22" strokeWidth="1.400" /><path d="M9 8l4 4-2 .5 1 2-1 .5-1-2-1 1z" fill="#fff" stroke="#333" /></Ic>
        <Ic w={15} h={15}><path d="M2 2h6M2 5h6M5 2v7" stroke="#666" /><path d="M8 7l4 4-2 .5 1 2-1 .5-1-2-1 1z" fill="#fff" stroke="#333" /></Ic>
        <Ic w={15} h={15}><path d="M1 5l6-3v10l-6 2z" fill="#3f8dc8" stroke="none" /><path d="M9 1l4 4M13 1L9 5" stroke="#d22" strokeWidth="1.400" /><path d="M8 8l4 4-2 .5 1 2-1 .5-1-2-1 1z" fill="#fff" stroke="#333" /></Ic>
        <Ic w={15} h={15}><path d="M5 1v10M1 6h9" stroke="#333" /><path d="M8 7l4 4-2 .5 1 2-1 .5-1-2-1 1z" fill="#fff" stroke="#333" /></Ic>
        <Ic w={15} h={15}><circle cx="7.500" cy="7.500" r="5.500" stroke="#aaa" strokeDasharray="2 2" /></Ic>
        <span className="flex items-center text-[10px]">
          <Ic w={14} h={14}><path d="M1 2h12L8.500 7.500V13l-3-2V7.500z" stroke="#666" /></Ic>
          :0
        </span>
      </div>
    </div>
  )
}

export default function App() {
  return (
    <div className="flex h-[720px] w-[1280px] flex-col overflow-hidden bg-black font-['Roboto',sans-serif]">
      <div className="h-[44px] shrink-0" />
      <div className="flex h-[628px] shrink-0 flex-col bg-[#d9d9d9]">
        <TitleBar />
        <TabRow />
        <Ribbon />
        <div className="h-[21px] border-t border-[#e2e2e2] bg-[#f4f4f4]" />
        <div className="flex min-h-0 flex-1 border-t border-[#c4c4c4]">
          <ProjectBrowser />
          <div className="flex w-[697px] shrink-0 flex-col pl-[2px]">
            <div className="flex h-[18px] items-center bg-[#d9d9d9]">
              <ViewTab label="Right" kind="house" className="w-[107px]" />
              <ViewTab label="View 1" kind="house" active className="w-[108px]" />
              <ViewTab label="Front" kind="house" className="w-[108px]" />
              <ViewTab label="Ref. Level" kind="sheet" className="w-[108px]" />
              <span className="ml-auto mr-[6px]">
                <svg width="7" height="6" viewBox="0 0 7 6"><path d="M0 .5h7" stroke="#333" /><path d="M0 2h7L3.500 6z" fill="#333" /></svg>
              </span>
            </div>
            <div className="flex min-h-0 flex-1">
              <div className="relative min-w-0 flex-1 border-l border-[#999] bg-white">
                <TableModel />
                <div className="absolute right-[11px] top-[12px]">
                  <ViewCube />
                </div>
              </div>
              <div className="flex w-[16px] shrink-0 flex-col items-center justify-between bg-[#f0f0f0] py-[4px]">
                <svg width="9" height="6" viewBox="0 0 9 6"><path d="M.5 5.500l4-4 4 4" fill="none" stroke="#666" strokeWidth="1.300" /></svg>
                <span className="h-[16px] w-[7px] rounded-[2px] bg-[#777]" />
                <svg width="9" height="6" viewBox="0 0 9 6"><path d="M.5.500l4 4 4-4" fill="none" stroke="#666" strokeWidth="1.300" /></svg>
              </div>
              <span className="w-[2px] shrink-0 bg-[#d9d9d9]" />
            </div>
            <ViewBar />
          </div>
          <PropertiesPanel />
        </div>
        <StatusBar />
      </div>
      <div className="h-[6px] shrink-0 bg-[#5c3630]" />
    </div>
  )
}
